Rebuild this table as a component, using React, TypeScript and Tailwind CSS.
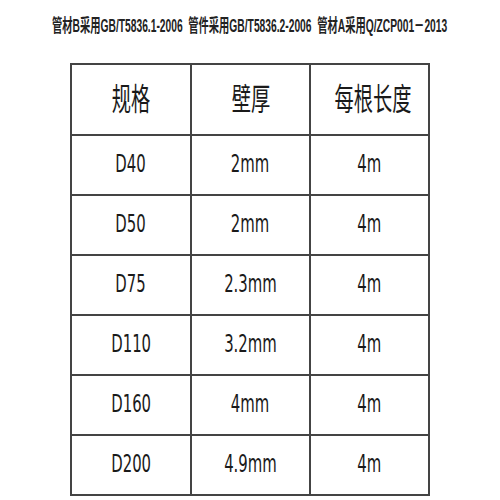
const rows = [
  ['D40', '2mm', '4m'],
  ['D50', '2mm', '4m'],
  ['D75', '2.3mm', '4m'],
  ['D110', '3.2mm', '4m'],
  ['D160', '4mm', '4m'],
  ['D200', '4.9mm', '4m'],
]

const cellFont = { fontFamily: '"DejaVu Sans", "Noto Sans CJK SC", sans-serif' }

const Cell = ({ text, head }: { text: string; head?: boolean }) => (
  <td className="border-2 border-[#444] p-0 text-center align-middle whitespace-nowrap">
    <span
      className={
        head
          ? 'inline-block origin-center scale-x-[0.62] text-[31px] leading-none text-[#1a1a1a]'
          : 'inline-block origin-center scale-x-[0.62] text-[24px] leading-none text-[#1a1a1a]'
      }
      style={cellFont}
    >
      {text}
    </span>
  </td>
)

export default function App() {
  return (
    <div className="w-[500px] h-[500px] bg-white overflow-hidden">
      <div className="h-[63px] pt-[14px] flex justify-center">
        <span
          className="shrink-0 inline-block origin-center scale-x-[0.57] text-[18px] leading-[24px] font-bold text-[#222] whitespace-pre"
          style={{ fontFamily: '"Liberation Sans", "Noto Sans CJK SC", sans-serif' }}
        >
          管材B采用GB/T5836.1-2006  管件采用GB/T5836.2-2006  管材A采用Q/ZCP001－2013
        </span>
      </div>
      <table className="mx-auto w-[358px] border-collapse table-fixed">
        <colgroup>
          <col className="w-[120px]" />
          <col className="w-[119px]" />
          <col className="w-[119px]" />
        </colgroup>
        <tbody>
          <tr className="h-[71px]">
            <Cell text="规格" head />
            <Cell text="壁厚" head />
            <Cell text="每根长度" head />
          </tr>
          {rows.map((r, i) => (
            <tr key={i} className="h-[60px]">
              {r.map((c, j) => (
                <Cell key={j} text={c} />
              ))}
            </tr>
          ))}
        </tbody>
      </table>
    </div>
  )
}
